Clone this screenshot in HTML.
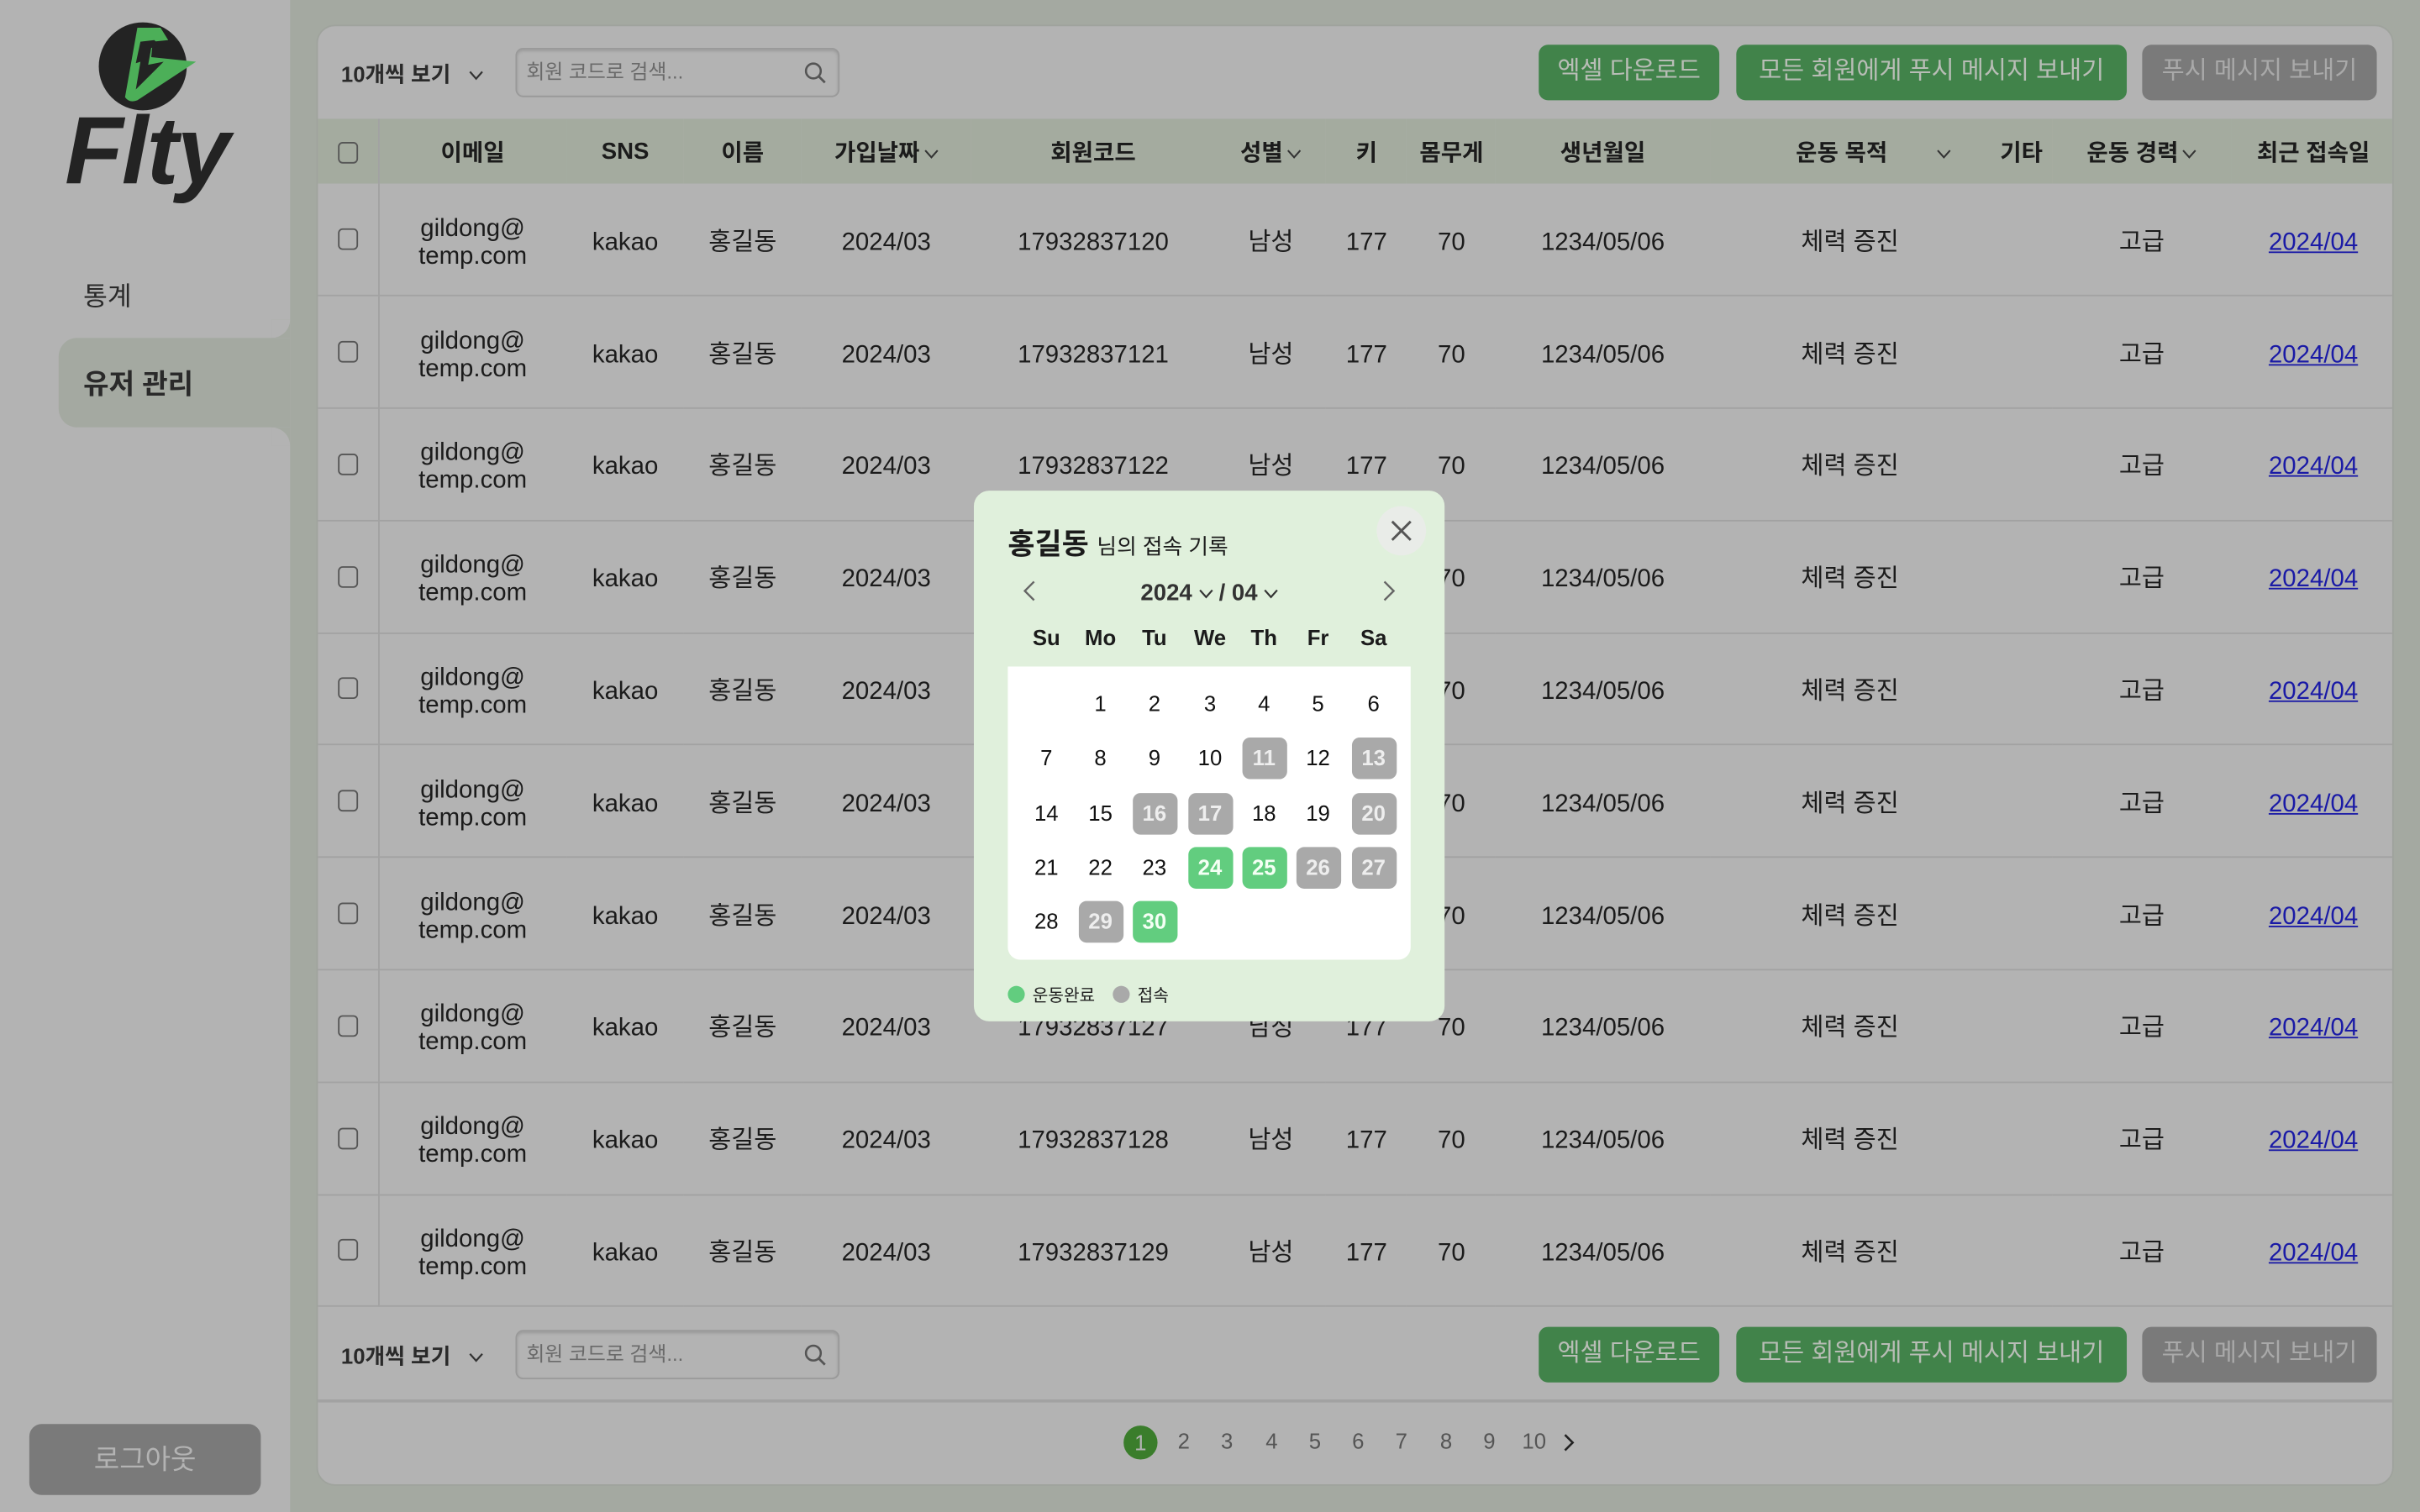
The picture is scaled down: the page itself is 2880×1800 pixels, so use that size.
<!DOCTYPE html>
<html><head><meta charset="utf-8">
<style>
*{margin:0;padding:0;box-sizing:border-box}
html,body{width:2880px;height:1800px;overflow:hidden;background:#a4a9a1}
body{font-family:"Liberation Sans","Noto Sans CJK KR",sans-serif;color:#1b1b1b}
#s{position:absolute;left:0;top:0;width:1568px;height:980px;transform:scale(1.836735);transform-origin:0 0;background:#a4a9a1}
.abs{position:absolute}
#side{left:0;top:0;width:188px;height:980px;background:#b3b3b3}
.navact{left:38px;top:219px;width:150px;height:58px;background:#a4a9a1;border-radius:12px 0 0 12px}
.c1{left:176px;top:207px;width:12px;height:12px;background:#b3b3b3;border-bottom-right-radius:12px}
.c1b{left:176px;top:207px;width:12px;height:12px;background:#a4a9a1}
#card{left:205px;top:16px;width:1346px;height:947px;background:#b3b3b3;border-radius:12px;border:1px solid #9fa39d;overflow:hidden}
.btn{position:absolute;height:36px;border-radius:6px;color:#b8bdb6;font-size:16px;line-height:36px;text-align:center;background:#41834a}
.gray{background:#7a7a7a;color:#a9a9a9}
.sel{position:absolute;font-size:14px;font-weight:bold;color:#2a2a2a}
.search{position:absolute;width:210px;height:32px;border:1px solid #999;border-radius:5px;font-size:13px;color:#6a6a6a;line-height:30px;padding-left:6px;box-shadow:inset 0 1px 2px rgba(0,0,0,.15)}
table{position:absolute;left:0;top:60px;border-collapse:collapse;table-layout:fixed;width:1346px}
th{height:42px;background:#a4ab9f;font-size:15px;font-weight:bold;text-align:center;color:#1b1b1b}
td{height:72.8px;border-bottom:1px solid #a2a2a2;font-size:16px;text-align:center;line-height:18px;padding-top:5px}
td:first-child,th:first-child{border-right:1px solid #a2a2a2}
td:first-child{padding-top:0}
.cb{display:inline-block;width:13px;height:14px;border:1.3px solid #555;border-radius:3px;vertical-align:middle}
a{color:#1a1aa6;text-decoration:underline}
.chev{display:inline-block;width:9px;height:6px;margin-left:3px;vertical-align:middle}
#modal{left:631px;top:318px;width:305px;height:344px;background:#e0f0dc;border-radius:10px}
.day{position:absolute;width:29px;height:27px;margin-left:-14.5px;margin-top:-13.5px;line-height:27px;text-align:center;font-size:14px;color:#111;border-radius:5px}
.g{background:#a9a9a9;color:#eee;font-weight:bold}
.gr{background:#62cd7f;color:#f4fff4;font-weight:bold}
.wd{position:absolute;width:30px;margin-left:-15px;text-align:center;font-size:14px;font-weight:bold;top:405px}
.pg{position:absolute;top:926px;font-size:14px;color:#555;width:20px;margin-left:-10px;text-align:center}
</style></head><body>
<div id="s">
<div id="side" class="abs"></div>
<div class="abs c1b"></div><div class="abs c1"></div>
<div class="abs" style="left:176px;top:277px;width:12px;height:12px;background:#a4a9a1"></div>
<div class="abs" style="left:176px;top:277px;width:12px;height:12px;background:#b3b3b3;border-top-right-radius:12px"></div>
<div class="abs navact"></div>
<svg class="abs" style="left:36px;top:10px" width="120" height="125" viewBox="36 10 120 125">
<circle cx="92.5" cy="43" r="28.5" fill="#232323"/>
<path d="M89 18 L104 18 L109 26 L99 27 L98 37 L127 40 L89 65 Q84 67 81 63 Z" fill="#4caf58"/>
<path d="M100 26 L104 30 L98 31 L96 42 L106 40 L88 58 L91 40 L88 41 L91 27 Z" fill="#232323"/>
<text x="42" y="119" font-family="Liberation Sans" font-weight="bold" font-style="italic" font-size="62" fill="#232323" letter-spacing="-1">Flty</text>
</svg>
<div class="abs" style="left:54px;top:178px;font-size:17px;color:#2a2a2a">통계</div>
<div class="abs" style="left:54px;top:235px;font-size:18px;font-weight:bold;color:#2a2a2a">유저 관리</div>
<div class="abs" style="left:19px;top:923px;width:150px;height:46px;background:#7a7a7a;border-radius:8px;color:#b3b3b3;font-size:18px;line-height:46px;text-align:center">로그아웃</div>

<div id="card" class="abs">
<div class="sel" style="left:15px;top:21px">10개씩 보기 <svg class="chev" style="margin-left:8px" viewBox="0 0 9 6"><polyline points="0.5,0.5 4.5,5 8.5,0.5" fill="none" stroke="#333" stroke-width="1.2"/></svg></div>
<div class="search" style="left:128px;top:14px">회원 코드로 검색...<svg class="abs" style="right:7px;top:8px" width="15" height="15" viewBox="0 0 15 15"><circle cx="6" cy="6" r="4.8" fill="none" stroke="#555" stroke-width="1.4"/><line x1="9.5" y1="9.5" x2="13.5" y2="13.5" stroke="#555" stroke-width="1.5"/></svg></div>
<div class="btn" style="left:791px;top:12px;width:117px">엑셀 다운로드</div>
<div class="btn" style="left:919px;top:12px;width:253px">모든 회원에게 푸시 메시지 보내기</div>
<div class="btn gray" style="left:1182px;top:12px;width:152px">푸시 메시지 보내기</div>

<table>
<colgroup><col style="width:39px"><col style="width:122px"><col style="width:76px"><col style="width:76px"><col style="width:110px"><col style="width:158px"><col style="width:72px"><col style="width:52px"><col style="width:58px"><col style="width:138px"><col style="width:182px"><col style="width:40px"><col style="width:116px"><col style="width:106px"></colgroup>
<tr><th><span class="cb"></span></th><th>이메일</th><th>SNS</th><th>이름</th><th>가입날짜<svg class="chev" viewBox="0 0 9 6"><polyline points="0.5,0.5 4.5,5 8.5,0.5" fill="none" stroke="#333" stroke-width="1.1"/></svg></th><th>회원코드</th><th>성별<svg class="chev" viewBox="0 0 9 6"><polyline points="0.5,0.5 4.5,5 8.5,0.5" fill="none" stroke="#333" stroke-width="1.1"/></svg></th><th>키</th><th>몸무게</th><th>생년월일</th><th style="text-align:left;padding-left:56px">운동 목적<svg class="chev" style="margin-left:32px" viewBox="0 0 9 6"><polyline points="0.5,0.5 4.5,5 8.5,0.5" fill="none" stroke="#333" stroke-width="1.1"/></svg></th><th>기타</th><th>운동 경력<svg class="chev" viewBox="0 0 9 6"><polyline points="0.5,0.5 4.5,5 8.5,0.5" fill="none" stroke="#333" stroke-width="1.1"/></svg></th><th>최근 접속일</th></tr>
<tr><td><span class="cb"></span></td><td>gildong@<br>temp.com</td><td>kakao</td><td>홍길동</td><td>2024/03</td><td>17932837120</td><td>남성</td><td>177</td><td>70</td><td>1234/05/06</td><td>체력 증진</td><td></td><td>고급</td><td><a>2024/04</a></td></tr>
<tr><td><span class="cb"></span></td><td>gildong@<br>temp.com</td><td>kakao</td><td>홍길동</td><td>2024/03</td><td>17932837121</td><td>남성</td><td>177</td><td>70</td><td>1234/05/06</td><td>체력 증진</td><td></td><td>고급</td><td><a>2024/04</a></td></tr>
<tr><td><span class="cb"></span></td><td>gildong@<br>temp.com</td><td>kakao</td><td>홍길동</td><td>2024/03</td><td>17932837122</td><td>남성</td><td>177</td><td>70</td><td>1234/05/06</td><td>체력 증진</td><td></td><td>고급</td><td><a>2024/04</a></td></tr>
<tr><td><span class="cb"></span></td><td>gildong@<br>temp.com</td><td>kakao</td><td>홍길동</td><td>2024/03</td><td>17932837123</td><td>남성</td><td>177</td><td>70</td><td>1234/05/06</td><td>체력 증진</td><td></td><td>고급</td><td><a>2024/04</a></td></tr>
<tr><td><span class="cb"></span></td><td>gildong@<br>temp.com</td><td>kakao</td><td>홍길동</td><td>2024/03</td><td>17932837124</td><td>남성</td><td>177</td><td>70</td><td>1234/05/06</td><td>체력 증진</td><td></td><td>고급</td><td><a>2024/04</a></td></tr>
<tr><td><span class="cb"></span></td><td>gildong@<br>temp.com</td><td>kakao</td><td>홍길동</td><td>2024/03</td><td>17932837125</td><td>남성</td><td>177</td><td>70</td><td>1234/05/06</td><td>체력 증진</td><td></td><td>고급</td><td><a>2024/04</a></td></tr>
<tr><td><span class="cb"></span></td><td>gildong@<br>temp.com</td><td>kakao</td><td>홍길동</td><td>2024/03</td><td>17932837126</td><td>남성</td><td>177</td><td>70</td><td>1234/05/06</td><td>체력 증진</td><td></td><td>고급</td><td><a>2024/04</a></td></tr>
<tr><td><span class="cb"></span></td><td>gildong@<br>temp.com</td><td>kakao</td><td>홍길동</td><td>2024/03</td><td>17932837127</td><td>남성</td><td>177</td><td>70</td><td>1234/05/06</td><td>체력 증진</td><td></td><td>고급</td><td><a>2024/04</a></td></tr>
<tr><td><span class="cb"></span></td><td>gildong@<br>temp.com</td><td>kakao</td><td>홍길동</td><td>2024/03</td><td>17932837128</td><td>남성</td><td>177</td><td>70</td><td>1234/05/06</td><td>체력 증진</td><td></td><td>고급</td><td><a>2024/04</a></td></tr>
<tr><td><span class="cb"></span></td><td>gildong@<br>temp.com</td><td>kakao</td><td>홍길동</td><td>2024/03</td><td>17932837129</td><td>남성</td><td>177</td><td>70</td><td>1234/05/06</td><td>체력 증진</td><td></td><td>고급</td><td><a>2024/04</a></td></tr>
</table>

<div class="sel" style="left:15px;top:852px">10개씩 보기 <svg class="chev" style="margin-left:8px" viewBox="0 0 9 6"><polyline points="0.5,0.5 4.5,5 8.5,0.5" fill="none" stroke="#333" stroke-width="1.2"/></svg></div>
<div class="search" style="left:128px;top:845px">회원 코드로 검색...<svg class="abs" style="right:7px;top:8px" width="15" height="15" viewBox="0 0 15 15"><circle cx="6" cy="6" r="4.8" fill="none" stroke="#555" stroke-width="1.4"/><line x1="9.5" y1="9.5" x2="13.5" y2="13.5" stroke="#555" stroke-width="1.5"/></svg></div>
<div class="btn" style="left:791px;top:843px;width:117px">엑셀 다운로드</div>
<div class="btn" style="left:919px;top:843px;width:253px">모든 회원에게 푸시 메시지 보내기</div>
<div class="btn gray" style="left:1182px;top:843px;width:152px">푸시 메시지 보내기</div>
<div class="abs" style="left:0;top:890px;width:1346px;height:2px;background:#a2a2a2"></div>
</div>

<div class="abs" style="left:728px;top:924px;width:22px;height:22px;border-radius:50%;background:#3a7d2b;color:#b3b3b3;font-size:14px;text-align:center;line-height:22px">1</div>
<div class="pg" style="left:767px">2</div><div class="pg" style="left:795px">3</div><div class="pg" style="left:824px">4</div><div class="pg" style="left:852px">5</div><div class="pg" style="left:880px">6</div><div class="pg" style="left:908px">7</div><div class="pg" style="left:937px">8</div><div class="pg" style="left:965px">9</div><div class="pg" style="left:994px">10</div>
<svg class="abs" style="left:1013px;top:929px" width="8" height="12" viewBox="0 0 8 12"><polyline points="1,1 6,6 1,11" fill="none" stroke="#222" stroke-width="1.4"/></svg>

<div id="modal" class="abs"></div>
<div class="abs" style="left:653px;top:338px;font-size:19px;font-weight:bold;color:#1b1b1b">홍길동 <span style="font-size:14px;font-weight:normal">님의 접속 기록</span></div>
<div class="abs" style="left:892px;top:328px;width:32px;height:32px;border-radius:50%;background:#e9ece8"></div>
<svg class="abs" style="left:901px;top:337px" width="14" height="14" viewBox="0 0 14 14"><path d="M1 1L13 13M13 1L1 13" stroke="#555" stroke-width="1.6"/></svg>
<svg class="abs" style="left:662px;top:376px" width="10" height="14" viewBox="0 0 10 14"><polyline points="8,1 2,7 8,13" fill="none" stroke="#666" stroke-width="1.3"/></svg>
<svg class="abs" style="left:895px;top:376px" width="10" height="14" viewBox="0 0 10 14"><polyline points="2,1 8,7 2,13" fill="none" stroke="#666" stroke-width="1.3"/></svg>
<div class="abs" style="left:653px;top:376px;width:261px;text-align:center;font-size:15px;font-weight:bold;color:#333">2024 <svg class="chev" style="margin-left:0" viewBox="0 0 9 6"><polyline points="0.5,0.5 4.5,5 8.5,0.5" fill="none" stroke="#333" stroke-width="1.2"/></svg> / 04 <svg class="chev" style="margin-left:0" viewBox="0 0 9 6"><polyline points="0.5,0.5 4.5,5 8.5,0.5" fill="none" stroke="#333" stroke-width="1.2"/></svg></div>
<div class="wd" style="left:678px">Su</div><div class="wd" style="left:713px">Mo</div><div class="wd" style="left:748px">Tu</div><div class="wd" style="left:784px">We</div><div class="wd" style="left:819px">Th</div><div class="wd" style="left:854px">Fr</div><div class="wd" style="left:890px">Sa</div>
<div class="abs" style="left:653px;top:432px;width:261px;height:190px;background:#fff;border-radius:0 0 8px 8px"></div>
<div class="day" style="left:713px;top:456px">1</div><div class="day" style="left:748px;top:456px">2</div><div class="day" style="left:784px;top:456px">3</div><div class="day" style="left:819px;top:456px">4</div><div class="day" style="left:854px;top:456px">5</div><div class="day" style="left:890px;top:456px">6</div>
<div class="day" style="left:678px;top:491px">7</div><div class="day" style="left:713px;top:491px">8</div><div class="day" style="left:748px;top:491px">9</div><div class="day" style="left:784px;top:491px">10</div><div class="day g" style="left:819px;top:491px">11</div><div class="day" style="left:854px;top:491px">12</div><div class="day g" style="left:890px;top:491px">13</div>
<div class="day" style="left:678px;top:527px">14</div><div class="day" style="left:713px;top:527px">15</div><div class="day g" style="left:748px;top:527px">16</div><div class="day g" style="left:784px;top:527px">17</div><div class="day" style="left:819px;top:527px">18</div><div class="day" style="left:854px;top:527px">19</div><div class="day g" style="left:890px;top:527px">20</div>
<div class="day" style="left:678px;top:562px">21</div><div class="day" style="left:713px;top:562px">22</div><div class="day" style="left:748px;top:562px">23</div><div class="day gr" style="left:784px;top:562px">24</div><div class="day gr" style="left:819px;top:562px">25</div><div class="day g" style="left:854px;top:562px">26</div><div class="day g" style="left:890px;top:562px">27</div>
<div class="day" style="left:678px;top:597px">28</div><div class="day g" style="left:713px;top:597px">29</div><div class="day gr" style="left:748px;top:597px">30</div>
<div class="abs" style="left:653px;top:639px;width:11px;height:11px;border-radius:50%;background:#62cd7f"></div>
<div class="abs" style="left:669px;top:637px;font-size:11px;color:#222">운동완료</div>
<div class="abs" style="left:721px;top:639px;width:11px;height:11px;border-radius:50%;background:#a9a9a9"></div>
<div class="abs" style="left:737px;top:637px;font-size:11px;color:#222">접속</div>
</div>
</body></html>
